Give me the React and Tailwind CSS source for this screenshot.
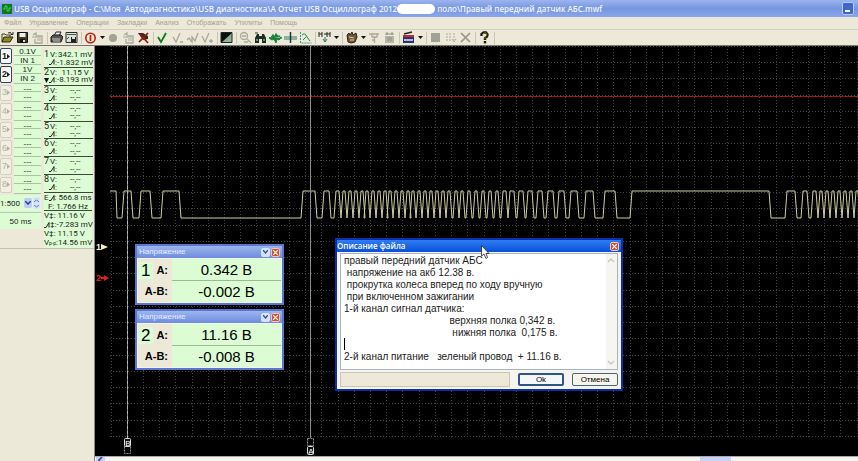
import React from 'react';

const MENU = ['Файл', 'Управление', 'Операции', 'Закладки', 'Анализ', 'Отображать', 'Утилиты', 'Помощь'];

const G = '#a9a89c';

function Icon({ children }) {
  return (
    <svg width="13" height="13" viewBox="0 0 13 13" fill="none" aria-hidden="true">
      {children}
    </svg>
  );
}

const exportIcon = (
  <Icon>
    <path d="M2 4l3-2v5M6 5h5v7H4V8" stroke={G} strokeWidth="1.3" />
    <path d="M6 7h4M6 9h4M1 6h3" stroke={G} />
  </Icon>
);

const TOOLS = [
  ['Открыть', <Icon><path d="M1 11V3h3l1 1h4v2" stroke="#3c3c10" /><path d="M1 11l2-5h9l-3 5z" fill="#8c8a1e" stroke="#26260a" /><path d="M7 2q3-2 4 2M9.500 3.500h2.500V1" stroke="#222" /></Icon>],
  ['Сохранить', <Icon><path d="M1.500 1.500h10v10h-10z" fill="#3d3f1c" stroke="#111" /><path d="M3.500 2h6v4h-6z" fill="#eee" /><path d="M4 8h5v4H4z" fill="#111" /><path d="M7 9h2v2H7z" fill="#ddd" /></Icon>],
  ['Экспорт', exportIcon],
  '|',
  ['Печать', <Icon><path d="M4 5l2-4h5L9 5" fill="#eee" stroke="#222" /><path d="M1 6l2-2h8l2 2-2 5H1z" fill="#555" stroke="#1b1b1b" /><path d="M2 8h8M3 10h7" stroke="#ccc" /></Icon>],
  ['Снимок', <Icon><path d="M1 1.500h11v10H1z" fill="#d7e4d4" stroke="#2b2b2b" /><path d="M2 3.500h9" stroke="#44604b" /><path d="M6 6h5v5H6z" fill="#222" /><path d="M7 6h3v2H7z" fill="#ddd" /><path d="M2 8l2-2" stroke="#346" /></Icon>],
  '|',
  ['Пуск', <Icon><circle cx="6.500" cy="7" r="4.700" stroke="#c01c12" strokeWidth="1.600" /><path d="M6.500 4v6" stroke="#c01c12" strokeWidth="1.700" /></Icon>],
  'v',
  ['Запись', <Icon><circle cx="6" cy="7" r="4" fill="#a2a196" /></Icon>],
  ['Копия', exportIcon],
  ['Удалить', <Icon><path d="M1 2h5l5 3v3L6 9z" fill="#3c2718" /><path d="M2 11l9-9M3 3l8 9" stroke="#8e1b12" strokeWidth="1.700" /></Icon>],
  '|',
  ['Принять', <Icon><path d="M2 6l3 5 5-9" stroke="#0c7a1c" strokeWidth="1.800" /></Icon>],
  ['Метка 1', <Icon><path d="M2 6l3 5 4-9M9 11h3" stroke={G} strokeWidth="1.300" /></Icon>],
  ['Метка 2', <Icon><path d="M1 9l2-2 3 4V6l3 4 3-8" stroke={G} strokeWidth="1.300" /></Icon>],
  ['Метка 3', <Icon><path d="M1 5l3 6 4-9M8 10h4M10 8v4" stroke={G} strokeWidth="1.300" /></Icon>],
  '|',
  ['Инверсия', <Icon><path d="M1 2h11v10H1z" fill="#91b19a" /><path d="M1 2h11L1 12z" fill="#07140c" /><path d="M1 1.500h11v10H1z" stroke="#222" /></Icon>],
  '|',
  ['Лупа', <Icon><circle cx="5" cy="5" r="3.500" stroke={G} strokeWidth="1.300" /><path d="M8 8l4 4M3 5h4M5 11h4" stroke={G} strokeWidth="1.300" /></Icon>],
  ['Поиск', <Icon><path d="M1 12V7l2-4h2v2h3V3h2l2 4v5H8V8H5v4z" fill="#192f20" /><path d="M3 8v2M10 8v2" stroke="#cfe0cf" /><path d="M1 2h3" stroke="#333" /></Icon>],
  ['Сигнал', <Icon><path d="M0 6.500h2l2-3 2 2 1-3 2 3 1-1 2 2.500h1M0 7l3 2 2-1 2 4 1-4 2 1 3-3" fill="#13813b" stroke="#13813b" /></Icon>],
  ['Курсоры', <Icon><path d="M0 6h13M0 8h13" stroke="#2c7c69" /><path d="M6.500 1v11" stroke="#173c34" strokeWidth="1.500" /></Icon>],
  ['Спектр', <Icon><path d="M1.500 1v11h11" stroke="#3b9685" strokeDasharray="2 1" /><path d="M3 4q3-3 5 2l3 4M4 9l3-3" stroke="#1e8a55" /></Icon>],
  '|',
  ['Интервал', <Icon><path d="M1 1v5M4 1v5M1 3h3M6 3h3M9 1v5M12 1v5M9 3h3" stroke="#222" /><path d="M5 8l2 3 2-3M7 6v5" stroke="#34715e" /></Icon>],
  'v',
  '|',
  ['Сценарий', <Icon><path d="M2 4l2-2 1 2 2-3 1 3 3-2 1 4-2 5-4 1-3-1z" fill="#71573a" stroke="#2b2217" /><path d="M4 6l5 1M5 9l4 0" stroke="#e4cc92" /></Icon>],
  'v',
  ['Шаг', <Icon><path d="M1 3h10M4 3v3h5V3M6.500 6v6M4 9h3" stroke={G} strokeWidth="1.300" /></Icon>],
  ['Стоп', <Icon><path d="M2 5h9v7H2z" fill="#b6b5a9" /><path d="M2 3h9M4 1v3M9 1v3M4 7h5M4 9h5" stroke="#8e8d83" /></Icon>],
  '|',
  ['Панель', <Icon><path d="M1 4h11v8H1z" fill="#2a3274" /><path d="M1 5h11" stroke="#c42b25" strokeWidth="2" /><path d="M2 9h9" stroke="#e9e9f4" strokeWidth="1.500" /><path d="M2 3l8-2" stroke="#222" strokeWidth="1.500" /></Icon>],
  'v',
  '|',
  ['Блок', <Icon><path d="M2 2h9v9H2z" fill="#a2a196" /></Icon>],
  ['Список', <Icon><path d="M2 3h5M2 6h5M2 9h5M10 2v8M8 8l2 3 2-3" stroke={G} strokeDasharray="2 1" /></Icon>],
  ['Закрыть', <Icon><path d="M2 2l9 9M11 2l-9 9" stroke="#97968c" strokeWidth="1.700" /></Icon>],
  '|',
  ['Справка', <Icon><path d="M3.500 5V3l2-1.500h2.500l1.500 2-.5 2L7 7v2" stroke="#1c1c08" strokeWidth="2.400" /><path d="M4 4l2-2h2l1 2-2 2v2" stroke="#8d8a2c" strokeWidth=".8" /><path d="M5.800 10h2.400v2.400H5.800z" fill="#1c1c08" /></Icon>],
  '|',
];

function Toolbar() {
  return (
    <div className="flex h-4 shrink-0 items-center border-b border-[#77766c] bg-[#ece9d8]">
      {TOOLS.map((tool, i) => {
        if (tool === '|') return <span key={i} className="flex w-1 justify-center"><span className="h-3 w-px bg-[#c9c6b5]" /></span>;
        if (tool === 'v')
          return (
            <button key={i} aria-label="Ещё" className="flex w-2 justify-center">
              <svg width="5" height="3" viewBox="0 0 5 3"><path d="M0 0h5L2.500 3z" fill="#111" /></svg>
            </button>
          );
        return <button key={i} aria-label={tool[0]} className="flex w-[15px] justify-center">{tool[1]}</button>;
      })}
    </div>
  );
}

const CHANNELS = [
  ['0.1V', 'IN 1', '342.1 mV', '-1.832 mV'],
  ['1V', 'IN 2', '11.15 V', '-8.193 mV'],
  ...Array.from({ length: 6 }, () => ['---', '---', '--,--', '--,--']),
];

function Delta() {
  return (
    <svg width="6" height="6" viewBox="0 0 6 6" className="shrink-0" aria-hidden="true">
      <path d="M0 5.500h2l3-5v5" fill="none" stroke="#222" />
    </svg>
  );
}

function Sidebar() {
  return (
    <aside className="w-[95px] shrink-0 border-r border-[#8b8a80] bg-[#ece9d8] text-[9px] leading-[9px] text-[#1c1c1c]">
      <div className="flex h-[203px] gap-[3px] border-b border-[#c4c1b0] pt-px">
        <div className="w-[41px]">
          <div className="grid h-[147px] grid-rows-8">
            {CHANNELS.map((c, i) => (
              <div key={i} className="flex gap-[2px]">
                <button
                  className={
                    i < 2
                      ? 'my-px flex w-3 items-center justify-center rounded-[2px] border border-[#2f4468] bg-[#f6f5ee] font-bold'
                      : 'my-px flex w-3 items-center justify-center rounded-[2px] border border-[#d3d0c0] bg-[#f1efe2] text-[#b3b1a2]'
                  }
                >
                  {i + 1}
                  <svg width="3" height="5" viewBox="0 0 3 5"><path d="M0 0l3 2.500L0 5z" fill="currentColor" /></svg>
                </button>
                <div className="grid flex-1 grid-rows-2 border-b border-[#a9c5a1] bg-[#dcfdd4] text-center text-[8px]">
                  <span className="border-b border-[#a9c5a1]">{c[0]}</span>
                  <span>{c[1]}</span>
                </div>
              </div>
            ))}
          </div>
          <div className="mt-px flex h-4 items-center gap-px bg-[#dcfdd4]">
            <select aria-label="Масштаб" className="w-[23px] appearance-none font-[Roboto] text-[8px]"><option>1:500</option></select>
            <span className="flex h-[10px] w-2 items-center justify-center rounded-[2px] bg-[#bccdf5]">
              <svg width="6" height="4" viewBox="0 0 6 4"><path d="M0 0l3 3 3-3" fill="none" stroke="#27427f" strokeWidth="1.500" /></svg>
            </span>
            <span className="flex h-3 w-[7px] flex-col justify-around rounded-[2px] bg-[#d8e2fa]">
              <svg width="7" height="3" viewBox="0 0 7 3"><path d="M1 3l2.500-2L6 3" fill="none" stroke="#5a76b8" /></svg>
              <svg width="7" height="3" viewBox="0 0 7 3"><path d="M1 0l2.500 2L6 0" fill="none" stroke="#5a76b8" /></svg>
            </span>
          </div>
          <div className="mt-px flex h-[17px] items-center justify-center border-t border-[#b5ceae] bg-[#dcfdd4] text-[8px]">50 ms</div>
        </div>
        <div className="mt-[3px] w-12 bg-[#dcfdd4] font-[Roboto]">
          <div className="grid h-[143px] grid-rows-8">
            {CHANNELS.map((c, i) => (
              <div key={i} className="flex border-b border-[#3d473a]">
                <div className="w-[5px]">
                  <div>{i + 1}</div>
                  {i === 1 && <svg width="5" height="6" viewBox="0 0 5 6"><path d="M0 1h5L2.500 6z" fill="#111" /></svg>}
                </div>
                <div className="flex-1 whitespace-nowrap text-[8px]">
                  <div className="flex h-2 justify-between pl-px"><span>V:</span><span className="flex-1 text-center">{c[2]}</span></div>
                  <div className="flex h-2 items-center"><Delta /><span>:</span><span className="flex-1 text-center">{c[3]}</span></div>
                </div>
              </div>
            ))}
          </div>
          <div className="h-[18px] whitespace-nowrap border-b border-[#3d473a] text-[8px]">
            <div className="flex h-[9px] items-center justify-between pr-1"><span>E</span><Delta /><span>: 566.8 ms</span></div>
            <div className="h-[9px] pr-1 text-right">F: 1.766 Hz</div>
          </div>
          <div className="whitespace-nowrap text-[8px]">
            <div>V‡: 11.16 V</div>
            <div className="flex items-center"><Delta />‡:-7.283 mV</div>
            <div>V‡: 11.15 V</div>
            <div>V<span className="text-[5px]">p-p</span>:14.56 mV</div>
          </div>
        </div>
      </div>
    </aside>
  );
}

/* Signal levels, in canvas pixels */
const HI = 145;
const LO = 172;

/* [rise end, fall start] of every pulse */
const PULSES = [
  [29, 36], [46, 55], [68, 84], [208, 220], [229, 234], [241, 244],
  ...[249, 255, 261, 267, 272, 278, 284, 290, 295, 301, 307, 313, 318, 324, 330, 336, 342, 348, 354, 361, 367, 374, 381, 388, 395, 402].map((x) => [x - 1, x + 1]),
  [408, 411], [415, 419], [424, 428], [433, 437], [443, 447], [453, 458], [464, 469], [476, 482], [491, 498],
  [510, 520], [537, 674], [692, 700], [708, 712], [718, 721],
  ...[726, 732, 738, 744, 750, 756, 762].map((x) => [x - 1, x + 1]),
];

const TRACE =
  `M15 ${HI}H21L22 ${LO}` +
  PULSES.map(([a, b]) => `H${a - 2}L${a} ${HI}H${b}L${b + 2} ${LO}`).join('');

function Trace() {
  const cols = Array.from({ length: 47 }, (_, i) => 15.5 + i * 16.22);
  const rows = Array.from({ length: 25 }, (_, i) => Math.round(1 + i * 16.24) - 0.5);
  return (
    <svg width="763" height="410" className="absolute left-0 top-0" aria-label="Осциллограмма">
      <g stroke="#424242" strokeDasharray="1 2">
        {cols.map((x) => <path key={x} d={`M${Math.round(x) + 0.5} 0V392`} />)}
        {rows.map((y) => <path key={y} d={`M15 ${y}H763`} />)}
      </g>
      <path d="M15 50.500H763" stroke="#8f1414" />
      <path d="M15 50.500H763" stroke="#b81c1c" strokeDasharray="2 3" />
      <path d={TRACE} fill="none" stroke="#cfcfa4" />
      <path d="M32.500 0V392M215.500 0V392" stroke="#8d8d8d" />
      <path d="M32.500 0V392" stroke="#b8b8b8" strokeDasharray="3 2" />
      <g fill="none" stroke="#999" strokeDasharray="2 1">
        <rect x="29.500" y="400.500" width="6" height="7" />
        <rect x="212.500" y="392.500" width="6" height="7" />
      </g>
      <g fill="#111" stroke="#ddd">
        <rect x="29.500" y="392.500" width="6" height="8" rx="1" />
        <rect x="212.500" y="400.500" width="6" height="8" rx="1" />
      </g>
      <g fill="#fff" fontSize="8" textAnchor="middle">
        <text x="33" y="400">B</text>
        <text x="216" y="408">A</text>
      </g>
      <g fontSize="9" fontWeight="bold">
        <text x="1" y="204" fill="#f2f2dc">1</text>
        <text x="1" y="235" fill="#e02020">2</text>
      </g>
      <path d="M6 198l7 3-7 3z" fill="#f2f2c8" />
      <path d="M6 231h3v-2l5 3-5 3v-2H6z" fill="#e02020" />
    </svg>
  );
}

function CloseButton() {
  return (
    <button aria-label="Закрыть" className="flex size-[9px] items-center justify-center rounded-[2px] border border-[#f3c3b5] bg-[#d8502f]">
      <svg width="5" height="5" viewBox="0 0 5 5"><path d="M0 0l5 5M5 0L0 5" stroke="#fff" strokeWidth="1.200" /></svg>
    </button>
  );
}

function Meter({ n, a, ab, className }) {
  return (
    <section className={className}>
      <header className="flex h-3 items-center gap-px bg-linear-to-b from-[#9db5f0] to-[#6d8ddc] px-[2px]">
        <h2 className="flex-1 text-[8px] leading-none text-[#e4ecff]">Напряжение</h2>
        <button aria-label="Свернуть" className="flex size-[9px] items-center justify-center rounded-[2px] bg-[#d5e2fb]">
          <svg width="5" height="4" viewBox="0 0 5 4"><path d="M0 0l2.500 3L5 0" fill="none" stroke="#2b4b90" strokeWidth="1.300" /></svg>
        </button>
        <CloseButton />
      </header>
      <div className="grid grid-cols-[34px_1fr] border border-[#f4f3ea] bg-[#ece9d8] leading-none">
        <div className="flex h-[22px] items-center justify-between pr-1">
          <span className="bg-[#dcfdd4] px-[3px] text-[17px]">{n}</span>
          <span className="text-[11px] font-bold">A:</span>
        </div>
        <div className="flex items-center justify-center border-b border-[#a0b89a] bg-[#dcfdd4] text-[15px]">{a}</div>
        <div className="flex h-[21px] items-center justify-end pr-1 text-[11px] font-bold">A-B:</div>
        <div className="flex items-center justify-center bg-[#dcfdd4] text-[15px]">{ab}</div>
      </div>
    </section>
  );
}

const NOTE = [
  'правый передний датчик АБС',
  ' напряжение на акб 12.38 в.',
  ' прокрутка колеса вперед по ходу вручную',
  ' при включенном зажигании',
  '1-й канал сигнал датчика:',
  ' '.repeat(38) + 'верхняя полка 0,342 в.',
  ' '.repeat(39) + 'нижняя полка  0,175 в.',
  '',
  '2-й канал питание   зеленый провод  + 11.16 в.',
].join('\n');

function Dialog() {
  return (
    <section role="dialog" aria-labelledby="dlg" className="absolute left-[240px] top-[192px] w-[288px] border-2 border-[#0b2fa8] bg-[#f5f4ee]">
      <header className="flex h-3 items-center justify-between bg-linear-to-b from-[#2f7df5] to-[#0750d8] pr-[2px]">
        <h2 id="dlg" className="font-['Open_Sans'] text-[8px] font-semibold leading-none text-white">Описание файла</h2>
        <CloseButton />
      </header>
      <div className="px-[3px] pb-[2px] pt-px">
        <div className="relative flex border border-[#a3b6c9] bg-white">
          <textarea
            aria-label="Описание"
            defaultValue={NOTE}
            spellCheck={false}
            className="h-[115px] flex-1 resize-none overflow-hidden whitespace-pre pl-[3px] pt-px text-[10px] leading-3 text-[#222] outline-none"
          />
          <span className="absolute left-[3px] top-[84px] h-3 w-px bg-black" />
          <div className="flex w-[11px] flex-col justify-between bg-[#f6f5ef] py-[2px]">
            <svg width="10" height="8" viewBox="0 0 10 8"><path d="M2 6l3-3 3 3" fill="none" stroke="#cbc9bd" strokeWidth="1.500" /></svg>
            <svg width="10" height="8" viewBox="0 0 10 8"><path d="M2 2l3 3 3-3" fill="none" stroke="#cbc9bd" strokeWidth="1.500" /></svg>
          </div>
        </div>
        <div className="mt-[2px] flex h-[15px] items-center gap-2 text-[8px]">
          <div className="h-full flex-1 border border-[#c9c6b2] bg-[#ece9d8]" />
          <button className="h-[13px] w-[46px] rounded-[2px] border-2 border-[#2e5488] bg-[#f4f6f8] leading-none">Ok</button>
          <button className="h-[13px] w-[46px] rounded-[2px] border border-[#4f6472] bg-[#f6f5ee] leading-none">Отмена</button>
        </div>
      </div>
    </section>
  );
}

export default function App() {
  return (
    <div className="flex h-screen flex-col overflow-hidden bg-[#ece9d8] font-['Liberation_Sans',Arial,sans-serif] text-black">
      <header className="flex h-[17px] shrink-0 items-center bg-linear-to-b from-[#9bb4ee] via-[#7696e0] to-[#8aa6ec] pl-[2px] pr-1 font-['Open_Sans',sans-serif] text-[8px] font-semibold text-[#f0f4ff]">
        <svg width="10" height="10" viewBox="0 0 10 10" aria-hidden="true">
          <rect width="10" height="10" fill="#0a7a1e" />
          <path d="M1 5h2V2h2v5h2V4h2" fill="none" stroke="#46d850" />
        </svg>
        <h1 className="flex flex-1 items-center whitespace-pre pl-[2px]">
          <span>USB Осциллограф - C:\Моя  Автодиагностика\USB диагностика\А Отчет USB Осциллограф 2012</span>
          <span className="h-[10px] w-[38px] rounded-full bg-white" />
          <span className="pl-[2px]">поло\Правый передний датчик АБС.mwf</span>
        </h1>
        <button aria-label="Свернуть окно" className="flex h-[13px] w-3 items-end rounded-[2px] border border-[#b9caf6] bg-[#3f66cf] p-[2px]">
          <span className="h-[2px] w-[5px] bg-white" />
        </button>
      </header>
      <nav className="flex h-[13px] shrink-0 items-center gap-2 border-b border-[#d2cfbe] px-1 text-[7px] text-[#a29f90]">
        {MENU.map((m) => <button key={m}>{m}</button>)}
      </nav>
      <Toolbar />
      <div className="flex min-h-0 flex-1">
        <Sidebar />
        <main className="flex min-w-0 flex-1 flex-col">
          <div className="relative flex-1 overflow-hidden bg-black">
            <Trace />
            <Meter n="1" a="0.342 В" ab="-0.002 В" className="absolute left-[40px] top-[198px] w-[149px] border-2 border-[#5a77cf]" />
            <Meter n="2" a="11.16 В" ab="-0.008 В" className="absolute left-[40px] top-[263px] w-[149px] border-2 border-[#5a77cf]" />
            <Dialog />
            <svg width="9" height="14" viewBox="0 0 9 14" className="absolute left-[386px] top-[199px]" aria-hidden="true">
              <path d="M.5.500v10.500l2.500-2 2 4.500 1.500-1-1.500-4h3z" fill="#fff" stroke="#222" strokeWidth=".8" />
            </svg>
          </div>
          <div className="flex h-[5px] border-t border-[#aaa] bg-[#f5f4ee]">
            <span className="ml-px flex w-[9px] justify-center bg-[#c4d3f8]">
              <svg width="5" height="4" viewBox="0 0 5 4"><path d="M4 0L1 3l1 1" fill="none" stroke="#25408a" strokeWidth="1.500" /></svg>
            </span>
            <span className="ml-[78%] w-[31px] bg-[#c6d2f7]" />
          </div>
        </main>
      </div>
    </div>
  );
}
